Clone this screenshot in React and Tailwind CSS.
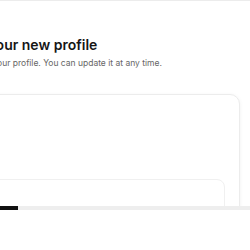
import React from 'react';

const ProfileCard = () => {
    return (
        <div className="rounded-[10px] border border-[#ececec] bg-white pt-[84px] pr-[14px] pl-[24px] pb-[40px] shadow-[0_1px_4px_rgba(0,0,0,0.06)]">
            <div className="h-[80px] rounded-[8px] border border-[#f0f0f0] bg-white"></div>
        </div>
    );
};

export default function App() {
    return (
        <div className="w-[250px] h-[250px] overflow-hidden bg-white font-['Inter',sans-serif]">
            <div className="h-[206px] overflow-hidden border-t border-[#ececec]">
                <div className="-ml-[61px] pr-[10px] pt-[34px]">
                    <h1 className="text-[14px] leading-[20px] font-semibold text-[#161616] whitespace-nowrap">Create your new profile</h1>
                    <p className="mt-[2px] text-[8.5px] leading-[12px] text-[#666666] whitespace-nowrap">Tell us about your profile. You can update it at any time.</p>
                    <div className="mt-[25px]">
                        <ProfileCard />
                    </div>
                </div>
            </div>
            <div className="flex h-[4px] bg-[#eeeeee]">
                <div className="w-[18px] bg-[#111111]"></div>
            </div>
        </div>
    );
}
